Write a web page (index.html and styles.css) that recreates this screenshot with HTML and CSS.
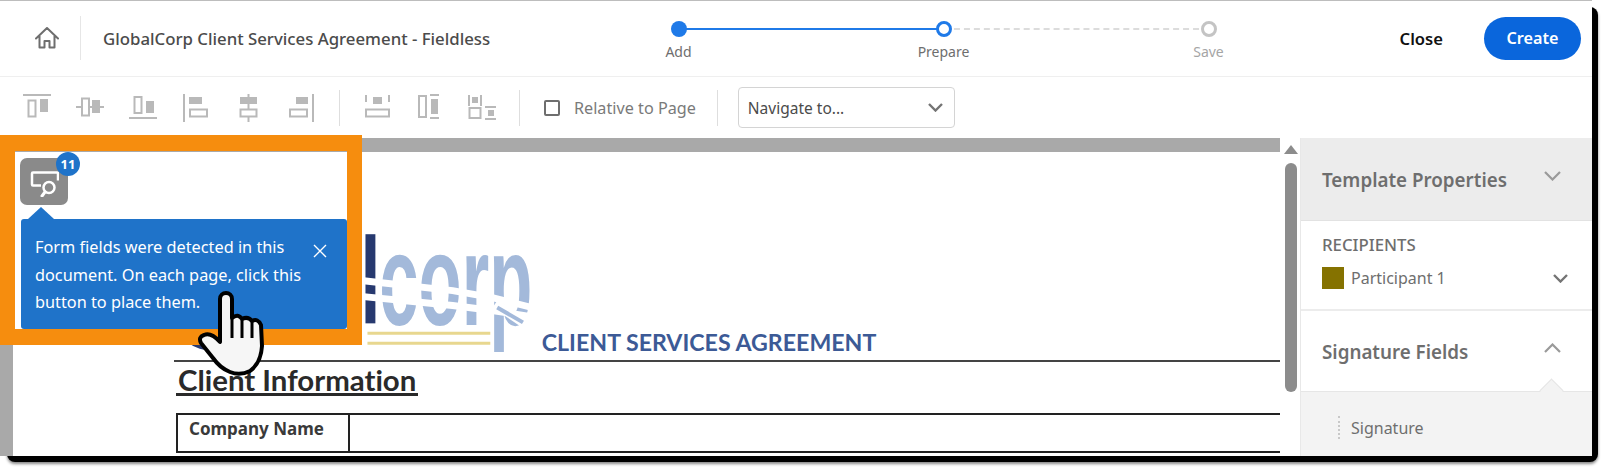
FILE: index.html
```html
<!DOCTYPE html>
<html lang="en">
<head>
    <meta charset="UTF-8">
    <meta name="viewport" content="width=device-width, initial-scale=1.0">
    <title>GlobalCorp Client Services Agreement - Fieldless</title>
    <link rel="stylesheet" href="styles.css">
</head>
<body>
    <div class="frame">
    <div class="window">
        <div class="header">
            <div class="header-left">
                <div class="home">
                    <svg width="24" height="22" viewBox="0 0 24 22" fill="none" stroke="#6e6e6e" stroke-width="2" stroke-linejoin="round" stroke-linecap="round">
                        <path d="M1 11.500 12 1l11 10.500M4.500 9v11.500H9.500v-6.500h5v6.500h5V9"/>
                    </svg>
                </div>
                <div class="doc-title">GlobalCorp Client Services Agreement - Fieldless</div>
            </div>
            <div class="stepper">
                <div class="step step-done"><span class="dot"></span><span class="step-label">Add</span></div>
                <div class="step step-current"><span class="dot"></span><span class="step-label">Prepare</span></div>
                <div class="step step-next"><span class="dot"></span><span class="step-label">Save</span></div>
            </div>
            <div class="actions">
                <span class="close-link">Close</span>
                <button class="create-btn">Create</button>
            </div>
        </div>

        <div class="toolbar">
            <div class="tool-group">
                <svg class="tool" viewBox="0 0 28 28"><path d="M0 1h28M5.500 6.500h7v16h-7z" class="line"/><rect x="17" y="5" width="8" height="13" class="solid"/></svg>
                <svg class="tool" viewBox="0 0 28 28"><path d="M0 13h6M13 13h3M24 13h4M6 4.500h7v17H6z" class="line"/><rect x="16" y="6" width="8" height="13" class="solid"/></svg>
                <svg class="tool" viewBox="0 0 28 28"><path d="M0 24h28M5.500 3h7v16h-7z" class="line"/><rect x="17" y="7" width="8" height="12" class="solid"/></svg>
            </div>
            <div class="tool-group">
                <svg class="tool" viewBox="0 0 28 28"><path d="M2 0v28M8 15.500h17v7H8z" class="line"/><rect x="7" y="3" width="13" height="7" class="solid"/></svg>
                <svg class="tool" viewBox="0 0 28 28"><path d="M13.500 0v4M13.500 10v6M13.500 23v5M5.500 15.500h16v7h-16z" class="line"/><rect x="5" y="3" width="17" height="7" class="solid"/></svg>
                <svg class="tool" viewBox="0 0 28 28"><path d="M25 0v28M2 15.500h17v7H2z" class="line"/><rect x="8" y="3" width="12" height="7" class="solid"/></svg>
            </div>
            <div class="tool-sep"></div>
            <div class="tool-group tool-group-tight">
                <svg class="tool" viewBox="0 0 28 28"><path d="M2 1v7M25 1v7M2 15.500h23v7H2z" class="line"/><rect x="9" y="3" width="9" height="7" class="solid"/></svg>
                <svg class="tool" viewBox="0 0 28 28"><path d="M3 2h7v21H3zM14 1h9M14 24h9" class="line"/><rect x="15" y="5" width="7" height="15" class="solid"/></svg>
                <svg class="tool" viewBox="0 0 28 28"><path d="M1 1v11M13 1v11M1.500 14h11v10h-11zM17 13h11M17 25h11" class="line"/><rect x="4" y="3" width="6" height="6" class="solid"/><rect x="20" y="16" width="6" height="6" class="solid"/></svg>
            </div>
            <div class="tool-sep"></div>
            <div class="relative-check"><span class="checkbox"></span>Relative to Page</div>
            <div class="tool-sep tool-sep-last"></div>
            <div class="nav-select">
                <span>Navigate to...</span>
                <svg width="15" height="9" viewBox="0 0 15 9" fill="none" stroke="#747474" stroke-width="2.400"><path d="M1 1l6.500 6.500L14 1"/></svg>
            </div>
        </div>

        <div class="work">
            <div class="doc-pane">
                <div class="page">
                    <svg class="logo" viewBox="0 0 1106 210">
                        <ellipse cx="36" cy="170" rx="40" ry="31" fill="#27396f"/>
                        <rect x="188" y="83" width="10" height="90" fill="#27396f"/>
                        <text class="logo-word" transform="translate(202 175) scale(.54 1)">corp</text>
                        <path d="M186 130 276 140 316 147 360 158M186 146 276 155 316 160 360 167" fill="none" stroke="#fff" stroke-width="7"/>
                        <path d="M319 153 349 173" fill="none" stroke="#fff" stroke-width="10"/>
                        <path d="M321 157 347 172" fill="none" stroke="#a3b9da" stroke-width="4"/>
                        <path d="M190 183h124M190 193h124" stroke="#e8d78f" stroke-width="3"/>
                        <text x="366" y="201" class="logo-title">CLIENT SERVICES AGREEMENT</text>
                    </svg>
                    <div class="section-title">Client Information</div>
                    <div class="form-row">
                        <div class="form-label">Company Name</div>
                        <div class="form-value"></div>
                    </div>
                </div>
            </div>
            <div class="scroll-gutter">
                <span class="scroll-arrow"></span>
                <span class="scroll-thumb"></span>
            </div>
            <div class="side-panel">
                <div class="panel-head panel-head-grey">
                    <span>Template Properties</span>
                    <svg class="chev" viewBox="0 0 17 10"><path d="M1 1l7.500 7.500L16 1"/></svg>
                </div>
                <div class="recipients">
                    <div class="recipients-title">RECIPIENTS</div>
                    <div class="recipient">
                        <span class="swatch"></span>
                        <span class="recipient-name">Participant 1</span>
                        <svg class="chev-small" viewBox="0 0 15 9"><path d="M1 1l6.500 6.500L14 1"/></svg>
                    </div>
                </div>
                <div class="panel-head panel-head-open">
                    <span>Signature Fields</span>
                    <svg class="chev" viewBox="0 0 17 10"><path d="M1 9l7.500-7.500L16 9"/></svg>
                </div>
                <div class="field-list">
                    <div class="field-item"><span class="grip"></span>Signature</div>
                </div>
            </div>
        </div>

        <!-- orange highlight + callout sit on top of the document -->
        <div class="highlight"></div>
        <div class="detect-btn">
            <svg width="30" height="30" viewBox="0 0 30 30" fill="none" stroke="#fff" stroke-width="2.500">
                <path d="M12 18.500H4a1 1 0 0 1-1-1V6.500a1 1 0 0 1 1-1h24a1 1 0 0 1 1 1v7"/>
                <circle cx="20" cy="20.500" r="5.500"/>
                <path d="M16 25 13 29" stroke-linecap="round" stroke-width="3"/>
            </svg>
            <span class="count">11</span>
        </div>
        <div class="callout">
            <p>Form fields were detected in this document. On each page, click this button to place them.</p>
            <svg class="callout-close" width="14" height="14" viewBox="0 0 14 14" stroke="#fff" stroke-width="1.400"><path d="M1 1l12 12M13 1 1 13"/></svg>
        </div>
        <svg class="hand" width="72" height="92" viewBox="0 0 72 92">
            <path d="M25 11a6 6 0 0 1 12 0V30Q43 25 47 31 53 28 57 33 63 30 66 37L67 58Q66 75 55 83 45 88 35 84 25 80 18 70L6 55Q3 49 9 47 16 44 25 54Z" fill="#f6f6f6" stroke="#000" stroke-width="4" stroke-linejoin="round"/>
            <path d="M37 30V50M47 32V50M57 33V50" stroke="#000" stroke-width="3" fill="none"/>
        </svg>
    </div>
    </div>
</body>
</html>
```

FILE: styles.css
```css
* {
    margin: 0;
    padding: 0;
    box-sizing: border-box;
}

html, body {
    width: 1605px;
    height: 467px;
    overflow: hidden;
}

body {
    background: white;
    font-family: 'Noto Sans', sans-serif;
    color: #4b4b4b;
}

/* holds the black drop shadow of the whole screenshot */
.frame {
    position: relative;
    width: 1600px;
    height: 465px;
}

.frame::before {
    content: '';
    position: absolute;
    left: 7px;
    top: 7px;
    width: 1591px;
    height: 455px;
    border-radius: 8px;
    background: #000;
    box-shadow: 0 2px 3px #888;
}

.window {
    position: absolute;
    left: 0;
    top: 0;
    width: 1592px;
    height: 456px;
    background: white;
    border-top: 1px solid #bdbdbd;
}

/* header */
.header {
    display: grid;
    grid-template-columns: 546px 795px 1fr;
    height: 76px;
    border-bottom: 1px solid #efefef;
    background: white;
}

.header-left {
    display: flex;
    align-items: center;
}

.home {
    width: 81px;
    height: 44px;
    margin-top: -1px;
    padding-left: 35px;
    display: flex;
    align-items: center;
    border-right: 1px solid #e6e6e6;
}

.doc-title {
    margin-left: 22px;
    font-size: 16.800px;
    font-weight: 500;
    color: #4b4b4b;
    white-space: nowrap;
}

.stepper {
    display: grid;
    grid-template-columns: repeat(3, 1fr);
    padding-top: 20px;
}

.step {
    position: relative;
    display: flex;
    flex-direction: column;
    align-items: center;
    gap: 5px;
    font-size: 14px;
    color: #6e6e6e;
}

.dot {
    width: 16px;
    height: 16px;
    border-radius: 50%;
    background: #1f7ae8;
    position: relative;
    z-index: 1;
}

.step::after {
    content: '';
    position: absolute;
    top: 7px;
    left: 50%;
    width: 100%;
    height: 2px;
    background: #1f7ae8;
}

.step-current .dot {
    background: white;
    border: 3px solid #1f7ae8;
}

.step-current::after {
    background: none;
    border-top: 2px dashed #dcdcdc;
}

.step-next {
    color: #a5a5a5;
}

.step-next .dot {
    background: white;
    border: 3px solid #c4c4c4;
}

.step-next::after {
    display: none;
}

.actions {
    display: flex;
    align-items: center;
    justify-content: flex-end;
    gap: 41px;
    padding-right: 11px;
    margin-top: -1px;
}

.close-link {
    font-size: 16.600px;
    font-weight: 600;
    color: #111;
}

.create-btn {
    width: 97px;
    height: 43px;
    border: none;
    border-radius: 22px;
    background: #0a66dc;
    color: white;
    font-family: inherit;
    font-size: 16.200px;
    font-weight: 600;
}

/* toolbar */
.toolbar {
    display: flex;
    align-items: center;
    height: 61px;
    padding-left: 23px;
    background: white;
}

.tool-group {
    display: flex;
    align-items: center;
    gap: 25px;
}

.tool-group + .tool-group {
    margin-left: 25px;
}

.tool-group-tight {
    gap: 24px;
}

.tool {
    width: 28px;
    height: 28px;
    flex: none;
}

.line {
    fill: none;
    stroke: #b9b9b9;
    stroke-width: 2;
}

.solid {
    fill: #b9b9b9;
}

.tool-sep {
    width: 1px;
    height: 36px;
    margin: 0 24px 0 23px;
    background: #dedede;
}

.relative-check {
    display: flex;
    align-items: center;
    gap: 14px;
    font-size: 16.200px;
    color: #7a7a7a;
}

.checkbox {
    width: 16px;
    height: 16px;
    border: 2px solid #6e6e6e;
    border-radius: 2px;
}

.tool-sep-last {
    margin: 0 20px 0 21px;
}

.nav-select {
    width: 217px;
    height: 41px;
    padding: 0 11px 0 9px;
    display: flex;
    align-items: center;
    justify-content: space-between;
    border: 1px solid #d4d4d4;
    border-radius: 4px;
    font-size: 15.500px;
    color: #4b4b4b;
}

/* document area */
.work {
    display: flex;
    height: 318px;
    background: white;
}

.doc-pane {
    width: 1280px;
    flex: none;
    padding: 14px 0 0 13px;
    background: #a9a9a9;
    overflow: hidden;
}

.page {
    height: 304px;
    padding-left: 161px;
    background: white;
    overflow: hidden;
}

.logo {
    display: block;
    width: 1106px;
    height: 210px;
    border-bottom: 2px solid #444;
}

.logo-word {
    font-family: 'Liberation Sans', sans-serif;
    font-size: 132px;
    font-weight: 700;
    fill: #a3b9da;
}

.logo-title {
    font-family: 'Lato', sans-serif;
    font-size: 23.400px;
    font-weight: 700;
    fill: #3c5a96;
}

.section-title {
    display: inline-block;
    margin: 4px 0 0 2px;
    padding: 0 2px;
    font-family: 'Lato', sans-serif;
    font-size: 29.400px;
    font-variant-ligatures: none;
    line-height: 27px;
    font-weight: 700;
    color: #2a2a2a;
    border-bottom: 3px solid #2a2a2a;
}

.form-row {
    display: flex;
    height: 40px;
    width: 1200px;
    margin: 17px 0 0 2px;
    border: 2px solid #222;
}

.form-label {
    width: 172px;
    padding: 3px 0 0 11px;
    border-right: 2px solid #222;
    font-size: 17px;
    line-height: 22px;
    font-weight: 700;
    color: #3a3a3a;
}

/* scrollbar */
.scroll-gutter {
    position: relative;
    width: 20px;
    flex: none;
    padding: 7px 3px 0 4px;
    display: flex;
    flex-direction: column;
    align-items: center;
}

.scroll-arrow {
    width: 0;
    height: 0;
    border-left: 7px solid transparent;
    border-right: 7px solid transparent;
    border-bottom: 9px solid #8c8c8c;
}

.scroll-thumb {
    width: 12px;
    height: 229px;
    margin-top: 9px;
    border-radius: 6px;
    background: #8c8c8c;
}

/* right panel */
.side-panel {
    flex: 1;
    border-left: 1px solid #e8e8e8;
    overflow: hidden;
    color: #6e6e6e;
}

.panel-head {
    display: flex;
    align-items: center;
    justify-content: space-between;
    padding: 2px 31px 0 21px;
    font-size: 18.800px;
    font-weight: 600;
}

.panel-head-grey {
    height: 83px;
    background: #ececec;
    border-bottom: 1px solid #e2e2e2;
}

.chev {
    width: 17px;
    height: 10px;
    margin-top: -8px;
    fill: none;
    stroke: #9a9a9a;
    stroke-width: 2.200;
}

.recipients {
    height: 90px;
    padding: 14px 24px 0 21px;
    border-bottom: 2px solid #ececec;
}

.recipients-title {
    font-size: 16.800px;
    line-height: 20px;
    font-weight: 500;
}

.recipient {
    display: flex;
    align-items: center;
    gap: 7px;
    margin-top: 12px;
    font-size: 16px;
}

.swatch {
    width: 22px;
    height: 22px;
    background: #857200;
}

.recipient-name {
    flex: 1;
}

.chev-small {
    width: 15px;
    height: 9px;
    fill: none;
    stroke: #747474;
    stroke-width: 2.400;
}

.panel-head-open {
    position: relative;
    height: 81px;
    border-bottom: 1px solid #e6e6e6;
}

.panel-head-open::after {
    content: '';
    position: absolute;
    right: 32px;
    bottom: -8px;
    width: 16px;
    height: 16px;
    background: #f3f3f3;
    border-top: 1px solid #e6e6e6;
    border-left: 1px solid #e6e6e6;
    transform: rotate(45deg);
}

.field-list {
    height: 64px;
    padding-top: 24px;
    background: #f3f3f3;
}

.field-item {
    display: flex;
    align-items: center;
    gap: 11px;
    padding-left: 37px;
    font-size: 16px;
}

.grip {
    width: 2px;
    height: 23px;
    border-left: 2px dotted #c8c8c8;
}

/* overlay */
.highlight {
    position: absolute;
    left: 0;
    top: 134px;
    width: 362px;
    height: 210px;
    border: solid #f68d0e;
    border-width: 16px 15px 16px 15px;
}

.detect-btn {
    position: absolute;
    left: 20px;
    top: 157px;
    width: 48px;
    height: 47px;
    display: flex;
    align-items: center;
    justify-content: center;
    border-radius: 7px;
    background: #8a8a8a;
}

.count {
    position: absolute;
    right: -12px;
    top: -6px;
    width: 24px;
    height: 24px;
    border-radius: 50%;
    background: #1f73c9;
    color: white;
    font-size: 13px;
    font-weight: 700;
    line-height: 24px;
    text-align: center;
}

.callout {
    position: absolute;
    left: 21px;
    top: 218px;
    width: 326px;
    height: 110px;
    padding: 15px 44px 0 14px;
    border-radius: 3px;
    background: #1f73c9;
    color: white;
    font-size: 16.300px;
    line-height: 27.500px;
}

.callout::before {
    content: '';
    position: absolute;
    left: 7px;
    top: -12px;
    border-left: 13px solid transparent;
    border-right: 13px solid transparent;
    border-bottom: 12px solid #1f73c9;
}

.callout-close {
    position: absolute;
    left: 292px;
    top: 25px;
}

.hand {
    position: absolute;
    left: 195px;
    top: 287px;
}
```
